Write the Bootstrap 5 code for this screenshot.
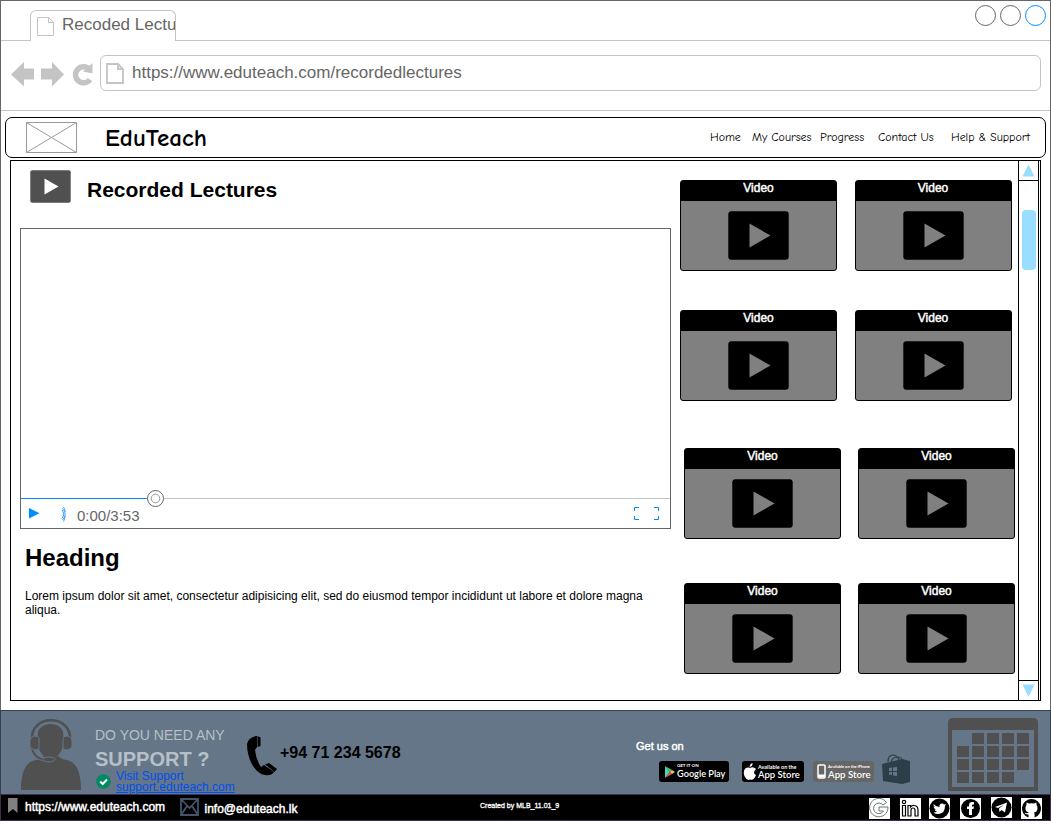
<!DOCTYPE html>
<html lang="en">
<head>
<meta charset="utf-8">
<meta name="viewport" content="width=device-width, initial-scale=1">
<title>EduTeach - Recorded Lectures</title>
<link href="https://cdn.jsdelivr.net/npm/bootstrap@5.3.0/dist/css/bootstrap.min.css" rel="stylesheet">
<style>
body{font-family:"Liberation Sans",Arial,sans-serif;font-size:12px;line-height:14px;color:#000;background:#fff;overflow:hidden}
svg{display:block;flex:none}
.window{width:1051px;height:825px}
.chrome{height:710px;border:1px solid #666;border-bottom:0}
.tabs{height:40px;border-bottom:1px solid #c4c4c4;padding:9px 4px 0 29px}
.page-tab{width:146px;height:31px;border:1px solid #c4c4c4;border-bottom:0;border-radius:6px 6px 0 0;background:#fff;color:#666;font-size:17px;line-height:28px;padding-left:6px}
.wbtn{width:21px;height:21px;border:1px solid #666;border-radius:50%;margin-top:-5px}
.wbtn.on{border-color:#008cff}
.address{height:70px;border-bottom:1px solid #c4c4c4;padding:14px 9px 0 10px}
.urlbox{width:941px;height:36px;border:1px solid #c4c4c4;border-radius:6px;color:#666;font-size:17px;line-height:34px;padding-left:5px}
.site-nav{margin:6px 4px 0;height:41px;border:1px solid #000;border-radius:7px;padding-left:20px;font-family:"Comic Sans MS","Comic Neue",Lato,cursive}
.brand-name{font-size:25px;font-weight:700;width:605px;margin-left:28px;line-height:40px}
.site-nav a{color:#000;text-decoration:none;white-space:nowrap;font-size:12px;line-height:38px;letter-spacing:-.05px}
.panel{margin:2px 9px 0;height:541px;border:1px solid #000}
.leftcol{width:669px;padding:9px 0 0 9px}
.page-title{font-size:21px;font-weight:700;line-height:24px;margin:8px 0 0 16px}
.player{width:651px;height:301px;border:1px solid #666;margin-top:25px}
.track{height:1px;background:#c4c4c4;margin-top:269px}
.played{width:126px;height:1px;background:#008cff}
.knob{left:126px;top:-8px}
.time{color:#666;font-size:15px;line-height:20px;margin:7px 0 0 9px}
.rightcol{width:338px}
.vrow{gap:17px;height:91px}
.vrow.wide{gap:17.5px}
.vcard{width:157px;height:90.5px;border:1px solid #000;border-radius:3px;background:#808080;flex:none}
.vhead{height:20px;background:#000;color:#fff;text-align:center;line-height:13px;padding-top:1px}
.faux{-webkit-text-stroke:.45px currentColor}
.vrow svg{margin:9.5px 0 0 47px}
.scroll{width:21px;border:solid #000;border-width:0 1px}
.sbtn{height:20px}
.thumb{width:14px;height:60px;border-radius:4px;background:#9df;margin:29px 0 0 2.5px}
.support{height:84px;background:#647687;border:1px solid #314354;border-bottom:0;padding-left:20px}
.need{font-size:14px;line-height:16px;color:#b8c0c7;margin-top:16px;white-space:nowrap}
.sup{font-size:20px;font-weight:700;line-height:22px;color:#b8c0c7;margin-top:5px}
.vis{color:#0050ef;line-height:11px;margin:1px 0 0 5px}
.phone{font-size:16px;font-weight:700;line-height:18px;margin:33px 0 0 3px;width:355px}
.store{height:21px;border-radius:3px;background:#000;color:#fff;font-family:Lato,sans-serif;white-space:nowrap}
.store small{display:block;font-size:5px;line-height:6px;margin-top:2px;font-weight:700}
.store b{display:block;font-size:11px;line-height:10px;font-weight:600}
.bottombar{height:27px;background:#000;border:1px solid #432d57;color:#fff}
.soc{margin-top:3px}
</style>
</head>
<body>
<svg width="0" height="0" class="position-absolute">
 <symbol id="play" viewBox="0 0 61 49"><rect x=".3" y=".3" width="60.4" height="48.4" rx="3"/><path fill="#808080" d="M21.5 12.5V36.5L42.5 24.5Z"/></symbol>
</svg>
<div class="window d-flex flex-column">
<div class="chrome">
 <div class="tabs d-flex justify-content-between">
  <div class="page-tab d-flex overflow-hidden text-nowrap"><svg width="17" height="20" style="margin-top:6px" fill="none" stroke="#c4c4c4"><path d="M.5.5H11.5L16.5 5.5V18.5H.5ZM11.5.5V5.5H16.5"/></svg><span style="margin-left:8px">Recoded Lectu</span></div>
  <div class="d-flex gap-1"><i class="wbtn"></i><i class="wbtn"></i><i class="wbtn on"></i></div>
 </div>
 <div class="address d-flex">
  <svg width="83" height="27" style="margin-top:6px" fill="#c4c4c4"><path d="M0 13.5 13 1V7.500H23V18.500H13V25.500ZM53 13.500 41 1V7.500H30V18.500H41V25.500Z"/><path d="M78.500 8.500A8 8 0 1 0 79 18.500" fill="none" stroke="#c4c4c4" stroke-width="5.500"/><path d="M81.500 2V12.500L72 10.500Z"/></svg>
  <div class="urlbox d-flex" style="margin-left:6px"><svg width="19" height="21" style="margin-top:7px" fill="none" stroke="#c4c4c4" stroke-width="1.800"><path d="M1 1H12L17 6V20H1ZM12 1V6H17"/></svg><span style="margin-left:7px">https://www.eduteach.com/recordedlectures</span></div>
 </div>
 <nav class="site-nav d-flex">
  <svg width="51" height="31" style="margin-top:4px" fill="none" stroke="#999"><path d="M.5.5H50.500V30.500H.5ZM.5.5 50.500 30.500M50.500.5.500 30.500"/></svg>
  <span class="brand-name">EduTeach</span>
  <a href="#" style="width:42px">Home</a><a href="#" style="width:68px">My Courses</a><a href="#" style="width:58px">Progress</a><a href="#" style="width:73px">Contact Us</a><a href="#">Help &amp; Support</a>
 </nav>
 <main class="panel d-flex">
  <section class="leftcol">
   <div class="d-flex" style="margin-left:10px"><svg width="41" height="33"><rect x=".3" y=".3" width="40.400" height="32.400" rx="2" fill="#505050"/><path fill="#fff" d="M14.500 8.500V24.500L28.500 16.500Z"/></svg><h1 class="page-title">Recorded Lectures</h1></div>
   <div class="player">
    <div class="track position-relative"><div class="played"></div><svg class="knob position-absolute" width="17" height="17" fill="#fff"><circle cx="8.500" cy="8.500" r="8" stroke="#666"/><circle cx="8.500" cy="8.500" r="4.300" stroke="#999"/></svg></div>
    <div class="d-flex"><svg width="11" height="11" style="margin:9px 0 0 8px"><path fill="#008cff" d="M0 0V10.500L10.500 5.200Z"/></svg>
     <svg width="7" height="17" style="margin:7px 0 0 21px" fill="none" stroke="#008cff"><path d="M1 4Q4.500 8 1 12.500M1.500 2.500Q7 8 1.500 14M2.500 1Q4 3 4 6M4 10Q4 13 2.500 15.500" stroke-width=".8"/></svg>
     <span class="time">0:00/3:53</span>
     <svg width="26" height="14" class="ms-auto" style="margin:8px 10px 0 0" fill="none" stroke="#008cff"><path d="M5 .5H.5V4M.5 9V12.500H5M20 .5H24.500V4M24.500 9V12.500H20"/></svg></div>
   </div>
   <h2 class="fw-bold" style="font-size:24px;line-height:28px;margin:15px 0 0 5px">Heading</h2>
   <p class="m-0" style="padding:17px 20px 0 5px">Lorem ipsum dolor sit amet, consectetur adipisicing elit, sed do eiusmod tempor incididunt ut labore et dolore magna aliqua.</p>
  </section>
  <section class="rightcol">
   <div class="vrow wide d-flex" style="margin-top:19px"><div class="vcard"><div class="vhead faux">Video</div><svg width="61" height="49"><use href="#play"/></svg></div><div class="vcard"><div class="vhead faux">Video</div><svg width="61" height="49"><use href="#play"/></svg></div></div>
   <div class="vrow wide d-flex" style="margin-top:39px"><div class="vcard"><div class="vhead faux">Video</div><svg width="61" height="49"><use href="#play"/></svg></div><div class="vcard"><div class="vhead faux">Video</div><svg width="61" height="49"><use href="#play"/></svg></div></div>
   <div class="vrow d-flex" style="margin:47px 0 0 4px"><div class="vcard"><div class="vhead faux">Video</div><svg width="61" height="49"><use href="#play"/></svg></div><div class="vcard"><div class="vhead faux">Video</div><svg width="61" height="49"><use href="#play"/></svg></div></div>
   <div class="vrow d-flex" style="margin:44px 0 0 4px"><div class="vcard"><div class="vhead faux">Video</div><svg width="61" height="49"><use href="#play"/></svg></div><div class="vcard"><div class="vhead faux">Video</div><svg width="61" height="49"><use href="#play"/></svg></div></div>
  </section>
  <div class="scroll d-flex flex-column"><div class="sbtn border-bottom" style="border-color:#000!important"><svg width="19" height="19"><path fill="#9df" d="M3.500 15.500H15.500L9.500 3.500Z"/></svg></div><div class="thumb"></div><div class="sbtn border-top mt-auto" style="border-color:#000!important"><svg width="19" height="18"><path fill="#9df" d="M3.500 3.500H15.500L9.500 16Z"/></svg></div></div>
 </main>
</div>
<section class="support d-flex">
 <svg width="60" height="73" style="margin-top:7px" fill="#505050"><path d="M0 72C0 57 3 44 15 42Q20 41 23 38L30 42 37 38Q40 41 45 42C57 44 60 57 60 72Z"/><path d="M17 14Q20 6 29.500 6T42 14L43 24Q41 35 35 39 29.500 42 24 39 18 35 16 24Z"/><path d="M11 21C10-4 50-4 49 21" fill="none" stroke="#505050" stroke-width="2.600"/><path d="M11 30Q13 41 25 41.500" fill="none" stroke="#647687" stroke-width="4"/><path d="M11 30Q13 41 25 41.500" fill="none" stroke="#505050" stroke-width="1.800"/><g stroke="#647687" stroke-width="1"><path d="M13.500 18Q9 19 9 22V28Q9 31 14 32Q18 32 18 30V20Q18 18 13.500 18ZM46.500 18Q51 19 51 22V28Q51 31 46 32Q42 32 42 30V20Q42 18 46.500 18Z"/><ellipse cx="28" cy="41.500" rx="6" ry="2.500"/></g></svg>
 <div style="width:171px;padding-left:14px"><div class="need">DO YOU NEED ANY</div><div class="sup">SUPPORT ?</div>
  <div class="d-flex"><svg width="15" height="15" style="margin:4px 0 0 1px"><circle cx="7.500" cy="7.500" r="7.200" fill="#008a62"/><path d="M4.200 7.500 6.700 10 11 5.500" fill="none" stroke="#fff" stroke-width="2"/></svg><div class="vis">Visit Support<br><u>support.eduteach.com</u></div></div></div>
 <svg width="30" height="40" style="margin:25px 0 0 -5px"><path d="M9 0Q1 2 0 8C0 22 7 37 18 39Q24 40 27 36L17 29 14 31Q9 24 8 14L10 11V0ZM10.500 0 13.500 1.500V10L10.500 11ZM18 28.500 22 27 30 33 27.500 36Z"/></svg>
 <div class="phone">+94 71 234 5678</div>
 <div style="width:247px"><div class="text-white faux" style="font-size:11px;margin-top:28px;line-height:14px;margin-left:1px">Get us on</div>
  <div class="d-flex" style="margin:8px 0 0 24px">
   <div class="store d-flex" style="width:70px"><svg width="18" height="21"><path fill="#40d9b5" d="M6 5V17L11 11Z"/><path fill="#ef4c58" d="M6 17 13 13 11 11Z"/><path fill="#59c56c" d="M6 5 13 9 11 11Z"/><path fill="#f3c34b" d="M13 9 16 11 13 13 11 11Z"/></svg><span><small style="font-size:4.500px">GET IT ON</small><b style="font-size:9.200px">Google Play</b></span></div>
   <div class="store d-flex" style="width:62px;margin-left:13px"><svg width="16" height="21" fill="#fff"><path d="M8 7Q11 5 14 8 10 12 14 14 12 20 8 18.500 5 20 3 16C0 11 3 5 8 7ZM7.500 6Q8 2.500 10.500 2 11 5 7.500 6Z"/></svg><span><small style="font-size:5.400px;margin-top:3px">Available on the</small><b style="font-size:9.500px;line-height:9px">App Store</b></span></div>
   <div class="store d-flex" style="width:61px;margin-left:9px;background:#666"><svg width="15" height="21" fill="none" stroke="#fff"><rect x="5" y="4" width="7" height="13" rx="1" stroke-width="1.500"/><path d="M5 15H12" stroke-width="3"/></svg><span><small style="font-size:4px;margin-top:3px">Available on the iPhone</small><b style="font-size:9.700px;line-height:9px">App Store</b></span></div>
  </div></div>
 <svg width="28" height="30" style="margin:43px 0 0 0"><g fill="none" stroke="#2d3e48" stroke-width="1.200"><path d="M6 8Q6 1 11 1 15 1 17 6M9 9Q10 3 15 3 20 3 20 7"/></g><path fill="#2d3e48" d="M0 10 20 5 28 7V28L20 30 1 27Z"/><path fill="#647687" d="M7 14 10 13.500V17H7ZM11 13.400 15 13V17H11ZM7 18H10V21L7 20.500ZM11 18H15V22L11 21.500Z"/></svg>
 <svg width="90" height="73" style="margin:7px 0 0 38px" fill="#505050"><path fill-rule="evenodd" d="M5 0H85Q90 0 90 5V73H0V5Q0 0 5 0ZM4 12V69H86V12Z"/><path d="M24 15h12v11H24zM39 15h12v11H39zM54 15h12v11H54zM69 15h12v11H69zM9 28h12v11H9zM24 28h12v11H24zM39 28h12v11H39zM54 28h12v11H54zM69 28h12v11H69zM9 41h12v11H9zM24 41h12v11H24zM39 41h12v11H39zM54 41h12v11H54zM69 41h12v11H69zM9 54h12v11H9zM24 54h12v11H24zM39 54h12v11H39zM54 54h12v11H54z"/></svg>
</section>
<footer class="bottombar d-flex">
 <svg width="10" height="16" style="margin:3px 0 0 7px"><path fill="#808080" d="M0 0H9.500V15L5 11 0 15Z"/></svg>
 <span class="faux" style="margin:5px 0 0 7px;width:155px">https://www.eduteach.com</span>
 <svg width="19" height="18" style="margin-top:3px" fill="none" stroke="#42546a" stroke-width="1.800"><path d="M1 1H18V17H1ZM1 1 9.500 10 18 1M1 17 7 8M18 17 12 8"/></svg>
 <span class="faux" style="margin:7px 0 0 5.500px;width:275.500px">info@eduteach.lk</span>
 <span class="faux" style="font-size:7px;width:389px;margin-top:4px;-webkit-text-stroke-width:.3px">Created by MLB_11.01_9</span>
 <div class="d-flex soc">
  <svg width="21" height="21"><path fill="#fff" d="M0 0h21v21H0z"/><path d="M17.500 4.500A9.200 9.200 0 1 0 19 9H10V13H14.500A5.300 5.300 0 1 1 14 7Z" fill="#fff" stroke="#455" stroke-width=".8"/></svg>
  <svg width="21" height="21" style="margin-left:10px"><path fill="#fff" d="M0 0h21v21H0z"/><g fill="#fff" stroke="#000" stroke-width="1.200"><circle cx="4" cy="4" r="1.700"/><path d="M2.500 7.500H5.500V18H2.500ZM8 7.500H10.500V9Q12 7 14.500 7.500 18 8 18 12V18H15V12Q15 10 13 10 11 10 11 12V18H8Z"/></g></svg>
  <svg width="21" height="21" style="margin-left:8px"><path fill="#fff" d="M0 0h21v21H0z"/><circle cx="10.500" cy="10.500" r="10"/><path fill="#fff" d="M4.500 6Q7 9 10.500 9 10 5.500 13 5.500 14.500 5.500 15 6.500L17 6 16 8Q16 15.500 9.500 16 6 16 4.500 14.500 7 14.500 8 13.500 6 13 5.500 11.500H7Q4.500 10.500 4.500 8.500L6 9Q4 7.500 4.500 6Z"/></svg>
  <svg width="21" height="21" style="margin-left:10px"><path fill="#fff" d="M0 0h21v21H0z"/><circle cx="10.500" cy="10.500" r="9.500"/><path fill="#fff" d="M9 17V11H7V8.500H9V7Q9 4 12 4H14V6.500H13Q12 6.500 12 7.500V8.500H14L13.500 11H12V17Z"/></svg>
  <svg width="21" height="21" style="margin:-1px 0 0 10px"><path fill="#fff" d="M0 0h21v21H0z"/><circle cx="10.500" cy="10.500" r="10"/><path fill="#fff" d="M4 10 16 5.500 14 15.500 10.500 13 8.500 15 8 11.500 13 7.500 7 11Z"/></svg>
  <svg width="21" height="21" style="margin-left:9px"><path fill="#fff" d="M0 0h21v21H0z"/><path d="M10.500 1A9.500 9.500 0 0 0 7.500 19.500V16.500Q4 17 3.500 14.500 6 16 8 14.500 4 14 4.500 10 4.500 8 5.500 7L5.500 4.500 8 5.500Q10.500 5 13 5.500L15.500 4.500 15.500 7Q16.500 8 16.500 10 16.500 14 13 14.500 14 15.500 13.500 19.500A9.500 9.500 0 0 0 10.500 1Z"/></svg>
 </div>
</footer>
</div>
<script src="https://cdn.jsdelivr.net/npm/bootstrap@5.3.0/dist/js/bootstrap.bundle.min.js"></script>
</body>
</html>
